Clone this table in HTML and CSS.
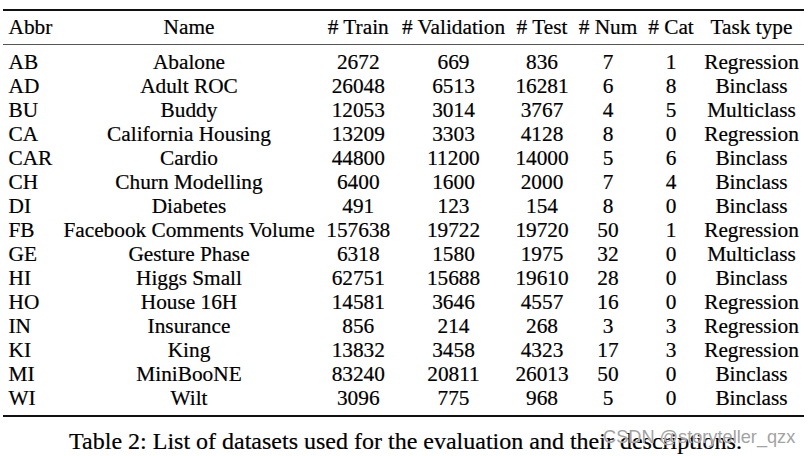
FILE: index.html
```html
<!DOCTYPE html>
<html lang="en">
<head>
<meta charset="utf-8">
<title>Table 2</title>
<link rel="stylesheet" href="styles.css">
</head>
<body>
<div class="page">
  <table class="data">
    <colgroup>
      <col class="c-abbr"><col class="c-name"><col class="c-train"><col class="c-val">
      <col class="c-test"><col class="c-num"><col class="c-cat"><col class="c-task">
    </colgroup>
    <thead>
      <tr>
        <th class="left">Abbr</th><th>Name</th><th># Train</th><th># Validation</th>
        <th># Test</th><th># Num</th><th># Cat</th><th>Task type</th>
      </tr>
    </thead>
    <tbody>
      <tr class="first"><td class="left">AB</td><td>Abalone</td><td>2672</td><td>669</td><td>836</td><td>7</td><td>1</td><td>Regression</td></tr>
      <tr><td class="left">AD</td><td>Adult ROC</td><td>26048</td><td>6513</td><td>16281</td><td>6</td><td>8</td><td>Binclass</td></tr>
      <tr><td class="left">BU</td><td>Buddy</td><td>12053</td><td>3014</td><td>3767</td><td>4</td><td>5</td><td>Multiclass</td></tr>
      <tr><td class="left">CA</td><td>California Housing</td><td>13209</td><td>3303</td><td>4128</td><td>8</td><td>0</td><td>Regression</td></tr>
      <tr><td class="left">CAR</td><td>Cardio</td><td>44800</td><td>11200</td><td>14000</td><td>5</td><td>6</td><td>Binclass</td></tr>
      <tr><td class="left">CH</td><td>Churn Modelling</td><td>6400</td><td>1600</td><td>2000</td><td>7</td><td>4</td><td>Binclass</td></tr>
      <tr><td class="left">DI</td><td>Diabetes</td><td>491</td><td>123</td><td>154</td><td>8</td><td>0</td><td>Binclass</td></tr>
      <tr><td class="left">FB</td><td>Facebook Comments Volume</td><td>157638</td><td>19722</td><td>19720</td><td>50</td><td>1</td><td>Regression</td></tr>
      <tr><td class="left">GE</td><td>Gesture Phase</td><td>6318</td><td>1580</td><td>1975</td><td>32</td><td>0</td><td>Multiclass</td></tr>
      <tr><td class="left">HI</td><td>Higgs Small</td><td>62751</td><td>15688</td><td>19610</td><td>28</td><td>0</td><td>Binclass</td></tr>
      <tr><td class="left">HO</td><td>House 16H</td><td>14581</td><td>3646</td><td>4557</td><td>16</td><td>0</td><td>Regression</td></tr>
      <tr><td class="left">IN</td><td>Insurance</td><td>856</td><td>214</td><td>268</td><td>3</td><td>3</td><td>Regression</td></tr>
      <tr><td class="left">KI</td><td>King</td><td>13832</td><td>3458</td><td>4323</td><td>17</td><td>3</td><td>Regression</td></tr>
      <tr><td class="left">MI</td><td>MiniBooNE</td><td>83240</td><td>20811</td><td>26013</td><td>50</td><td>0</td><td>Binclass</td></tr>
      <tr class="last"><td class="left">WI</td><td>Wilt</td><td>3096</td><td>775</td><td>968</td><td>5</td><td>0</td><td>Binclass</td></tr>
    </tbody>
  </table>
  <p class="caption">Table 2: List of datasets used for the evaluation and their descriptions.</p>
  <span class="watermark">CSDN @storyteller_qzx</span>
</div>
</body>
</html>
```

FILE: styles.css
```css
html, body {
  margin: 0;
  padding: 0;
  background: #ffffff;
}

.page {
  position: relative;
  width: 811px;
  height: 456px;
  overflow: hidden;
  font-family: "Liberation Serif", "Times New Roman", serif;
  color: #000;
  -webkit-text-stroke: 0.2px #000;
}

.data {
  margin: 9px 0 0 3px;
  width: 801px;
  table-layout: fixed;
  border-collapse: separate;
  border-spacing: 0;
  font-size: 21.3px;
}

.c-abbr { width: 54.5px; }
.c-name { width: 263px; }
.c-train { width: 75.5px; }
.c-val { width: 115px; }
.c-test { width: 62px; }
.c-num { width: 70px; }
.c-cat { width: 56px; }
.c-task { width: 105px; }

.data th,
.data td {
  padding: 0;
  text-align: center;
  font-weight: normal;
  white-space: nowrap;
}

.data th {
  line-height: 24px;
  padding-top: 4.2px;
  padding-bottom: 5.3px;
  border-top: 2px solid #111;
  border-bottom: 1px solid #555;
}

.data td {
  line-height: 23.93px;
}

.data .left {
  text-align: left;
  padding-left: 5.5px;
}

.data tr.first td {
  padding-top: 6px;
}

.data tr.last td {
  padding-bottom: 4.6px;
  border-bottom: 2px solid #111;
}

.caption {
  margin: 11.3px 0 0;
  text-align: center;
  font-size: 24px;
  line-height: 26px;
}

.watermark {
  position: absolute;
  left: 603px;
  top: 428px;
  font-family: "Liberation Sans", Arial, sans-serif;
  font-size: 18.2px;
  line-height: 18.2px;
  color: #a3a3a3;
  -webkit-text-stroke: 0;
  text-shadow: 0 0 1px #fff;
  white-space: nowrap;
}
```
